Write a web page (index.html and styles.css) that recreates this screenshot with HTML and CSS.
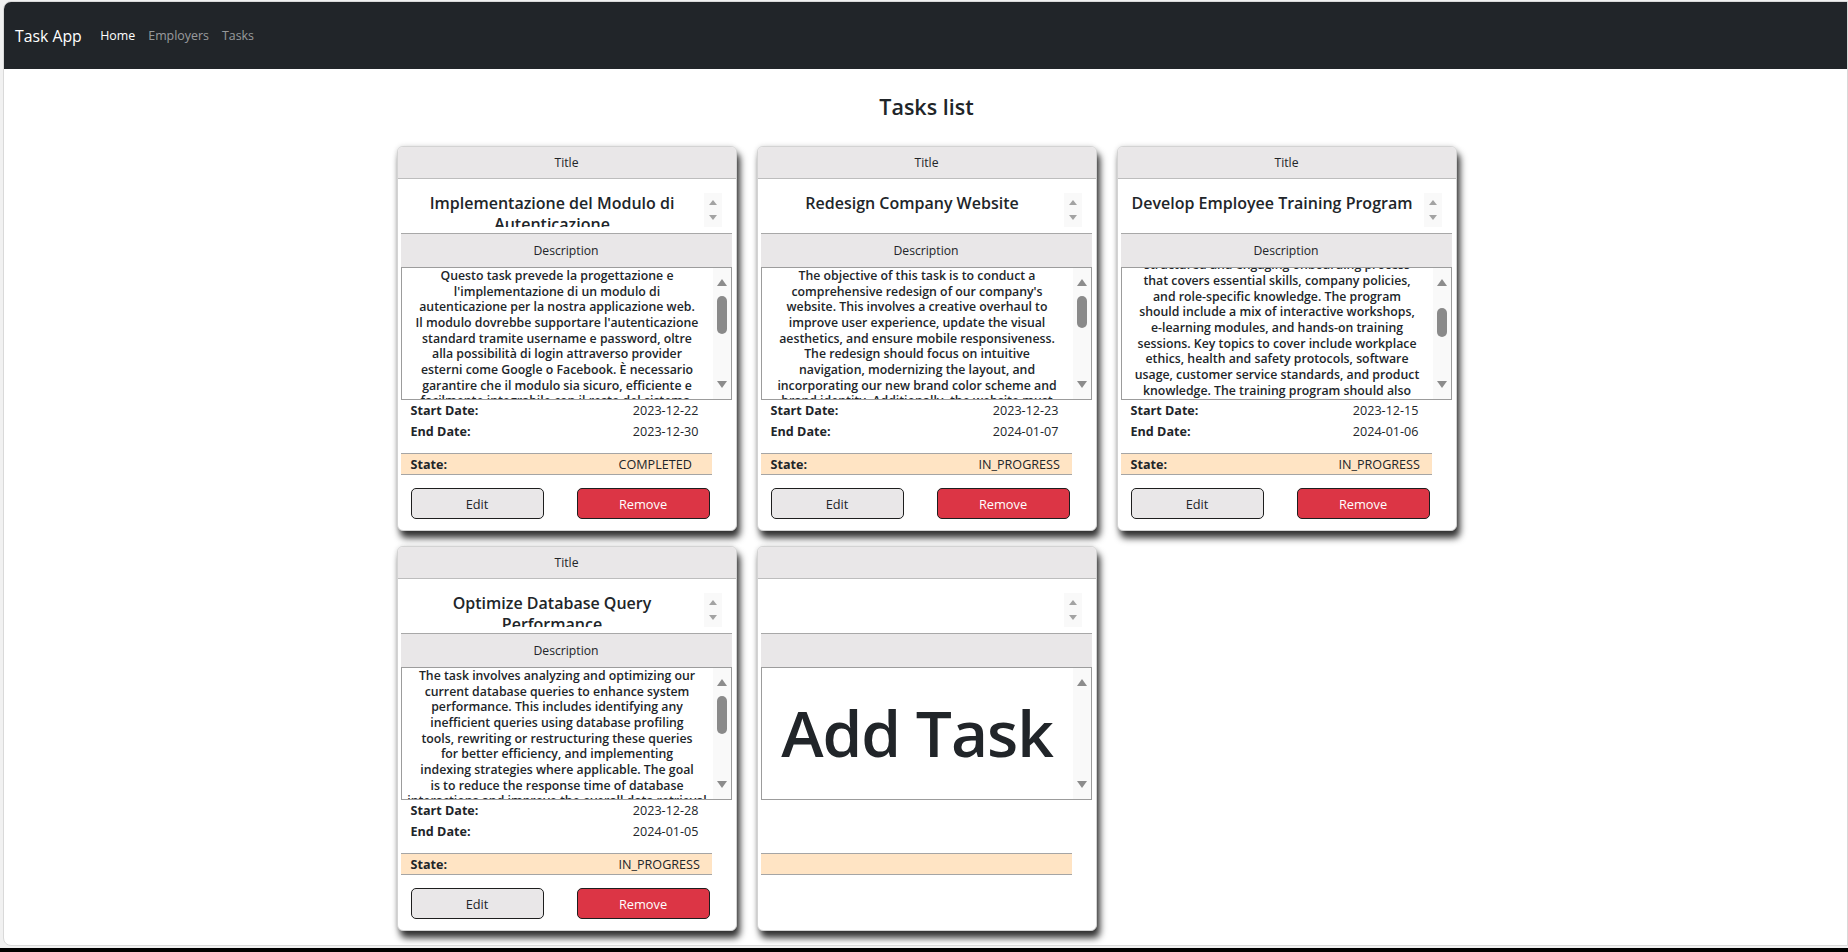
FILE: index.html
```html
<!DOCTYPE html>
<html lang="en">
<head>
<meta charset="utf-8">
<title>Task App</title>
<link rel="stylesheet" href="styles.css">
</head>
<body>
<div class="window">
  <nav class="navbar">
    <a class="brand">Task App</a>
    <ul class="nav">
      <li><a class="nav-link active">Home</a></li>
      <li><a class="nav-link">Employers</a></li>
      <li><a class="nav-link">Tasks</a></li>
    </ul>
  </nav>
  <main class="content">
    <h1 class="page-title">Tasks list</h1>
    <div class="grid">

      <article class="card">
        <div class="band">Title</div>
        <div class="card-body">
          <div class="title-wrap">
            <div class="title-box">
              <div class="title-text">Implementazione del Modulo di<br>Autenticazione</div>
              <div class="sb sb-small"><span class="up"></span><span class="down"></span></div>
            </div>
          </div>
          <div class="band band-desc">Description</div>
          <div class="desc-box">
            <div class="desc-text"><div class="desc-inner">Questo task prevede la progettazione e<br>l'implementazione di un modulo di<br>autenticazione per la nostra applicazione web.<br>Il modulo dovrebbe supportare l'autenticazione<br>standard tramite username e password, oltre<br>alla possibilità di login attraverso provider<br>esterni come Google o Facebook. È necessario<br>garantire che il modulo sia sicuro, efficiente e<br>facilmente integrabile con il resto del sistema.</div></div>
            <div class="sb"><span class="up"></span><span class="thumb"></span><span class="down"></span></div>
          </div>
          <div class="dates">
            <div class="row"><span class="label">Start Date:</span><span>2023-12-22</span></div>
            <div class="row"><span class="label">End Date:</span><span>2023-12-30</span></div>
          </div>
          <div class="state"><span class="label">State:</span><span class="state-value">COMPLETED</span></div>
          <div class="actions">
            <button class="btn btn-edit">Edit</button>
            <button class="btn btn-remove">Remove</button>
          </div>
        </div>
      </article>

      <article class="card">
        <div class="band">Title</div>
        <div class="card-body">
          <div class="title-wrap">
            <div class="title-box">
              <div class="title-text">Redesign Company Website</div>
              <div class="sb sb-small"><span class="up"></span><span class="down"></span></div>
            </div>
          </div>
          <div class="band band-desc">Description</div>
          <div class="desc-box">
            <div class="desc-text"><div class="desc-inner">The objective of this task is to conduct a<br>comprehensive redesign of our company's<br>website. This involves a creative overhaul to<br>improve user experience, update the visual<br>aesthetics, and ensure mobile responsiveness.<br>The redesign should focus on intuitive<br>navigation, modernizing the layout, and<br>incorporating our new brand color scheme and<br>brand identity. Additionally, the website must</div></div>
            <div class="sb"><span class="up"></span><span class="thumb thumb-2"></span><span class="down"></span></div>
          </div>
          <div class="dates">
            <div class="row"><span class="label">Start Date:</span><span>2023-12-23</span></div>
            <div class="row"><span class="label">End Date:</span><span>2024-01-07</span></div>
          </div>
          <div class="state"><span class="label">State:</span><span class="state-value">IN_PROGRESS</span></div>
          <div class="actions">
            <button class="btn btn-edit">Edit</button>
            <button class="btn btn-remove">Remove</button>
          </div>
        </div>
      </article>

      <article class="card">
        <div class="band">Title</div>
        <div class="card-body">
          <div class="title-wrap">
            <div class="title-box">
              <div class="title-text">Develop Employee Training Program</div>
              <div class="sb sb-small"><span class="up"></span><span class="down"></span></div>
            </div>
          </div>
          <div class="band band-desc">Description</div>
          <div class="desc-box">
            <div class="desc-text"><div class="desc-inner scrolled">This task involves developing a comprehensive<br>training program for new employees, creating a<br>structured and engaging onboarding process<br>that covers essential skills, company policies,<br>and role-specific knowledge. The program<br>should include a mix of interactive workshops,<br>e-learning modules, and hands-on training<br>sessions. Key topics to cover include workplace<br>ethics, health and safety protocols, software<br>usage, customer service standards, and product<br>knowledge. The training program should also<br>include regular assessments and feedback.</div></div>
            <div class="sb"><span class="up"></span><span class="thumb thumb-3"></span><span class="down"></span></div>
          </div>
          <div class="dates">
            <div class="row"><span class="label">Start Date:</span><span>2023-12-15</span></div>
            <div class="row"><span class="label">End Date:</span><span>2024-01-06</span></div>
          </div>
          <div class="state"><span class="label">State:</span><span class="state-value">IN_PROGRESS</span></div>
          <div class="actions">
            <button class="btn btn-edit">Edit</button>
            <button class="btn btn-remove">Remove</button>
          </div>
        </div>
      </article>

      <article class="card">
        <div class="band">Title</div>
        <div class="card-body">
          <div class="title-wrap">
            <div class="title-box">
              <div class="title-text">Optimize Database Query<br>Performance</div>
              <div class="sb sb-small"><span class="up"></span><span class="down"></span></div>
            </div>
          </div>
          <div class="band band-desc">Description</div>
          <div class="desc-box">
            <div class="desc-text"><div class="desc-inner">The task involves analyzing and optimizing our<br>current database queries to enhance system<br>performance. This includes identifying any<br>inefficient queries using database profiling<br>tools, rewriting or restructuring these queries<br>for better efficiency, and implementing<br>indexing strategies where applicable. The goal<br>is to reduce the response time of database<br>interactions and improve the overall data retrieval</div></div>
            <div class="sb"><span class="up"></span><span class="thumb"></span><span class="down"></span></div>
          </div>
          <div class="dates">
            <div class="row"><span class="label">Start Date:</span><span>2023-12-28</span></div>
            <div class="row"><span class="label">End Date:</span><span>2024-01-05</span></div>
          </div>
          <div class="state"><span class="label">State:</span><span class="state-value">IN_PROGRESS</span></div>
          <div class="actions">
            <button class="btn btn-edit">Edit</button>
            <button class="btn btn-remove">Remove</button>
          </div>
        </div>
      </article>

      <article class="card">
        <div class="band"></div>
        <div class="card-body">
          <div class="title-wrap">
            <div class="title-box">
              <div class="title-text"></div>
              <div class="sb sb-small"><span class="up"></span><span class="down"></span></div>
            </div>
          </div>
          <div class="band band-desc"></div>
          <div class="desc-box">
            <div class="desc-text add-text">Add Task</div>
            <div class="sb"><span class="up"></span><span class="down"></span></div>
          </div>
          <div class="dates">
            <div class="row"></div>
            <div class="row"></div>
          </div>
          <div class="state"></div>
        </div>
      </article>

    </div>
  </main>
</div>
<div class="taskbar"></div>
</body>
</html>
```

FILE: styles.css
```css
* { box-sizing: border-box; }

html, body {
  margin: 0;
  height: 952px;
  overflow: hidden;
}

body {
  background: #f1f1f1;
  font-family: "Open Sans", "Noto Sans", sans-serif;
  color: #212529;
}

.window {
  margin: 1px 0 2px 3px;
  height: 945px;
  background: #fff;
  border: 1px solid #d9d9d9;
  border-radius: 8px 0 0 8px;
  overflow: hidden;
}

.taskbar {
  height: 4px;
  background: #000;
}

/* Navbar */
.navbar {
  height: 67px;
  background: #212529;
  display: flex;
  align-items: center;
  padding-left: 11px;
}

.brand {
  color: #fff;
  font-size: 15.8px;
  margin-right: 12px;
}

.nav {
  list-style: none;
  margin: 0;
  padding: 0;
  display: flex;
}

.nav-link {
  display: block;
  padding: 0 6.5px;
  font-size: 12.4px;
  color: rgba(255, 255, 255, 0.55);
}

.nav-link.active {
  color: #fff;
}

/* Content */
.content {
  padding-left: 2px;
}

.page-title {
  margin: 24px 0 25px;
  text-align: center;
  font-size: 21.5px;
  line-height: 28px;
  font-weight: 600;
}

.grid {
  display: grid;
  grid-template-columns: repeat(3, 340px);
  column-gap: 20px;
  row-gap: 15px;
  justify-content: center;
}

/* Card */
.card {
  height: 385px;
  background: #fff;
  border: 1px solid #d3d3d3;
  border-radius: 6px;
  box-shadow: 3px 7px 7px rgba(0, 0, 0, 0.8), 0 0 5px rgba(0, 0, 0, 0.15);
  display: flex;
  flex-direction: column;
  overflow: hidden;
}

.band {
  flex: none;
  height: 32px;
  background: #e9e7e8;
  border-bottom: 1px solid #bdbdbd;
  display: flex;
  align-items: center;
  justify-content: center;
  font-size: 12.2px;
}

.card-body {
  flex: 1;
  padding: 0 4px 0 3px;
  display: flex;
  flex-direction: column;
}

.title-wrap {
  height: 55px;
  padding: 14px 10px 6px 0;
  border-bottom: 1px solid #a8a8a8;
}

.title-box {
  height: 34px;
  display: flex;
}

.title-text {
  flex: 1;
  overflow: hidden;
  text-align: center;
  font-size: 16px;
  font-weight: 600;
  line-height: 21px;
  white-space: nowrap;
}

.band-desc {
  height: 33px;
  border-bottom: none;
}

.desc-box {
  height: 133px;
  border: 1px solid #9c9c9c;
  display: flex;
}

.desc-text {
  flex: 1;
  overflow: hidden;
  text-align: center;
  font-size: 12.3px;
  font-weight: 600;
  line-height: 15.67px;
  white-space: nowrap;
}

.desc-inner.scrolled {
  margin-top: -42px;
}

.add-text {
  display: flex;
  align-items: center;
  justify-content: center;
  font-size: 64px;
  line-height: 1;
  font-weight: 600;
  letter-spacing: -1px;
  padding-bottom: 2px;
}

/* Scrollbars */
.sb {
  flex: none;
  width: 18px;
  background: #f9f9f9;
  display: flex;
  flex-direction: column;
  align-items: center;
}

.sb .up {
  width: 0;
  height: 0;
  margin-top: 11px;
  border-left: 5.5px solid transparent;
  border-right: 5.5px solid transparent;
  border-bottom: 7px solid #8c8c8c;
}

.sb .down {
  width: 0;
  height: 0;
  margin-top: auto;
  margin-bottom: 11px;
  border-left: 5.5px solid transparent;
  border-right: 5.5px solid transparent;
  border-top: 7px solid #8c8c8c;
}

.sb .thumb {
  width: 10px;
  height: 38px;
  margin-top: 10px;
  border-radius: 5px;
  background: #8a8a8a;
}

.sb .thumb-2 { height: 32px; }
.sb .thumb-3 { height: 29px; margin-top: 22px; }

.sb-small .up {
  margin-top: 7px;
  border-left-width: 4px;
  border-right-width: 4px;
  border-bottom: 5px solid #a3a3a3;
}

.sb-small .down {
  margin-bottom: 7px;
  border-left-width: 4px;
  border-right-width: 4px;
  border-top: 5px solid #a3a3a3;
}

/* Dates & state */
.dates {
  padding: 0 33px 0 10px;
}

.row {
  height: 21px;
  display: flex;
  align-items: center;
  justify-content: space-between;
  font-size: 12.6px;
}

.label {
  font-weight: 700;
}

.state {
  margin-top: 11px;
  width: 311px;
  height: 22px;
  background: #ffe4c4;
  border-top: 1px solid #a5a5a5;
  border-bottom: 1px solid #a5a5a5;
  padding-left: 10px;
  display: flex;
  align-items: center;
  font-size: 12.6px;
}

.state .label {
  flex: 1;
}

.state-value {
  width: 93px;
}

/* Buttons */
.actions {
  margin-top: 13px;
  padding-left: 10px;
  display: flex;
  gap: 33px;
}

.btn {
  width: 133px;
  height: 31px;
  border-radius: 5px;
  border: 1px solid #1e1e1e;
  font-family: inherit;
  font-size: 12.8px;
  cursor: pointer;
}

.btn-edit {
  background: #e9e7e8;
  color: #212529;
}

.btn-remove {
  background: #dc3545;
  color: #fff;
}
```
